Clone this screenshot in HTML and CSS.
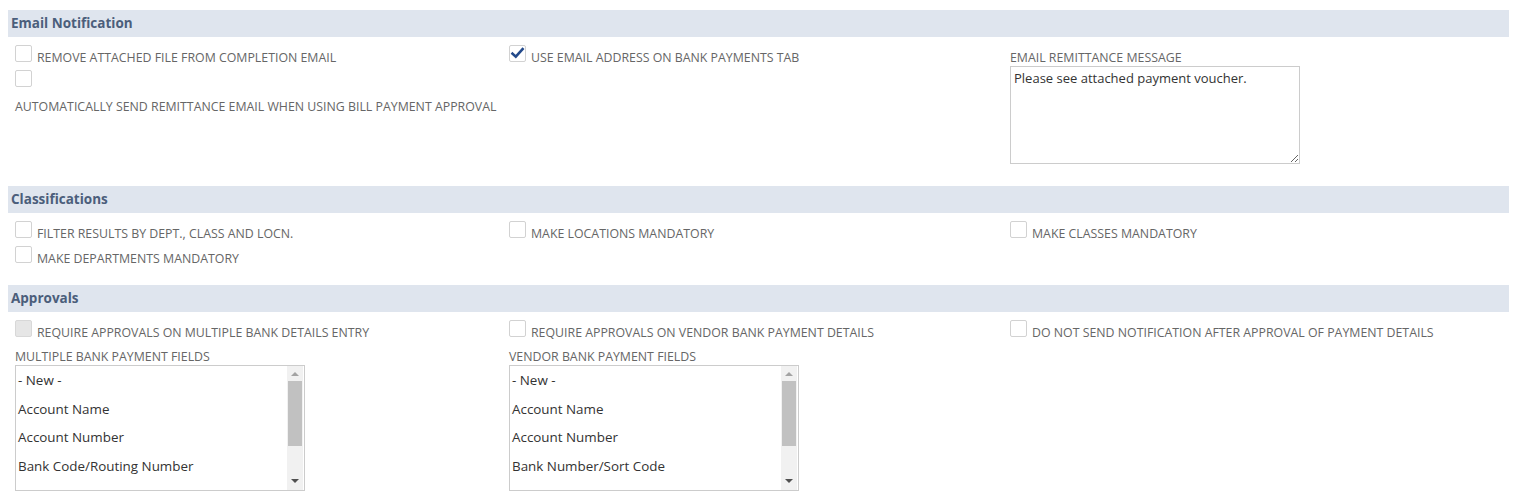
FILE: index.html
```html
<!DOCTYPE html>
<html lang="en">
<head>
    <meta charset="UTF-8">
    <title>Payment Preferences</title>
    <link rel="stylesheet" href="styles.css">
</head>
<body>
    <div class="page">

        <!-- Email Notification -->
        <section class="group">
            <div class="group-head">Email Notification</div>
            <div class="fields">
                <div class="col">
                    <div class="check-field"><span class="box"></span><span class="check-label">Remove attached file from completion email</span></div>
                    <div class="check-field wrap"><span class="box"></span><span class="check-label">Automatically send remittance email when using bill payment approval</span></div>
                </div>
                <div class="col">
                    <div class="check-field">
                        <span class="box checked">
                            <svg width="17" height="17" viewBox="0 0 17 17"><path d="M3.5 8.6 L6.8 11.6 L13.6 4.2" fill="none" stroke="#234a8b" stroke-width="2.6" stroke-linecap="square"/></svg>
                        </span><span class="check-label">Use email address on bank payments tab</span>
                    </div>
                </div>
                <div class="col msg-col">
                    <div class="field-label">Email Remittance Message</div>
                    <textarea class="msg" readonly>Please see attached payment voucher.</textarea>
                </div>
            </div>
        </section>

        <!-- Classifications -->
        <section class="group">
            <div class="group-head">Classifications</div>
            <div class="fields">
                <div class="col">
                    <div class="check-field"><span class="box"></span><span class="check-label">Filter results by dept., class and locn.</span></div>
                    <div class="check-field"><span class="box"></span><span class="check-label">Make departments mandatory</span></div>
                </div>
                <div class="col">
                    <div class="check-field"><span class="box"></span><span class="check-label">Make locations mandatory</span></div>
                </div>
                <div class="col">
                    <div class="check-field"><span class="box"></span><span class="check-label">Make classes mandatory</span></div>
                </div>
            </div>
        </section>

        <!-- Approvals -->
        <section class="group">
            <div class="group-head">Approvals</div>
            <div class="fields">
                <div class="col">
                    <div class="check-field"><span class="box disabled"></span><span class="check-label">Require approvals on multiple bank details entry</span></div>
                    <div class="field-label list-label">Multiple Bank Payment Fields</div>
                    <div class="listbox">
                        <div class="list-items">
                            <div class="list-item">- New -</div>
                            <div class="list-item">Account Name</div>
                            <div class="list-item">Account Number</div>
                            <div class="list-item">Bank Code/Routing Number</div>
                            <div class="list-item">BIC</div>
                        </div>
                        <div class="scrollbar">
                            <span class="arrow up"></span>
                            <span class="thumb"></span>
                            <span class="arrow down"></span>
                        </div>
                    </div>
                </div>
                <div class="col">
                    <div class="check-field"><span class="box"></span><span class="check-label">Require approvals on vendor bank payment details</span></div>
                    <div class="field-label list-label">Vendor Bank Payment Fields</div>
                    <div class="listbox">
                        <div class="list-items">
                            <div class="list-item">- New -</div>
                            <div class="list-item">Account Name</div>
                            <div class="list-item">Account Number</div>
                            <div class="list-item">Bank Number/Sort Code</div>
                            <div class="list-item">BIC</div>
                        </div>
                        <div class="scrollbar">
                            <span class="arrow up"></span>
                            <span class="thumb"></span>
                            <span class="arrow down"></span>
                        </div>
                    </div>
                </div>
                <div class="col">
                    <div class="check-field"><span class="box"></span><span class="check-label">Do not send notification after approval of payment details</span></div>
                </div>
            </div>
        </section>

    </div>
</body>
</html>
```

FILE: styles.css
```css
/* Genel sayfa */
body {
    margin: 0;
    background: #fff;
    font-family: "Open Sans", "Liberation Sans", sans-serif;
    overflow: hidden;
}

.page {
    padding: 10px 17px 0 8px;
}

/* Bölüm başlıkları */
.group-head {
    height: 27px;
    line-height: 27px;
    padding-left: 3px;
    background-color: #dfe5ee;
    color: #4b5e7b;
    font-size: 13.5px;
    font-weight: bold;
}

.fields {
    display: grid;
    grid-template-columns: 494px 501px 1fr;
    padding: 8px 0 14px 7px;
}

/* Onay kutuları */
.check-field {
    line-height: 24px;
    font-size: 12.35px;
    color: #666;
}

.box {
    display: inline-block;
    width: 15px;
    height: 15px;
    border: 1px solid #d2d2d2;
    border-radius: 2px;
    background: #fff;
    vertical-align: baseline;
}

.box.checked {
    position: relative;
}

.box.checked svg {
    position: absolute;
    left: -1px;
    top: -1px;
}

.box.disabled {
    background: #e6e6e6;
    border-color: #d8d8d8;
}

.check-label {
    margin-left: 5px;
    text-transform: uppercase;
}

.check-field.wrap .check-label {
    display: block;
    margin-left: 0;
}

.field-label {
    font-size: 12.35px;
    line-height: 17px;
    color: #666;
    text-transform: uppercase;
}

/* Mesaj alanı */
.msg-col {
    padding-top: 4px;
}

.msg {
    display: block;
    width: 290px;
    height: 98px;
    box-sizing: border-box;
    margin: 0 0 8px;
    padding: 2px 3px;
    border: 1px solid #ccc;
    font-family: "Open Sans", "Liberation Sans", sans-serif;
    font-size: 13px;
    color: #333;
    outline: none;
}

/* Liste kutuları */
.list-label {
    margin-top: 3px;
}

.listbox {
    display: flex;
    width: 290px;
    height: 126px;
    box-sizing: border-box;
    border: 1px solid #ccc;
    overflow: hidden;
}

.list-items {
    flex: 1;
    overflow: hidden;
}

.list-item {
    height: 28.7px;
    line-height: 28.7px;
    padding-left: 2px;
    font-size: 13.4px;
    color: #333;
    white-space: nowrap;
}

.scrollbar {
    width: 16px;
    margin-right: 1px;
    background: #f1f1f1;
    display: flex;
    flex-direction: column;
    align-items: center;
}

.arrow {
    width: 0;
    height: 0;
    border-left: 4px solid transparent;
    border-right: 4px solid transparent;
}

.arrow.up {
    margin: 6px 0 5px;
    border-bottom: 4px solid #a3a3a3;
}

.arrow.down {
    margin: auto 0 7px;
    border-top: 4px solid #505050;
}

.thumb {
    width: 14px;
    height: 65px;
    background: #c1c1c1;
}
```
